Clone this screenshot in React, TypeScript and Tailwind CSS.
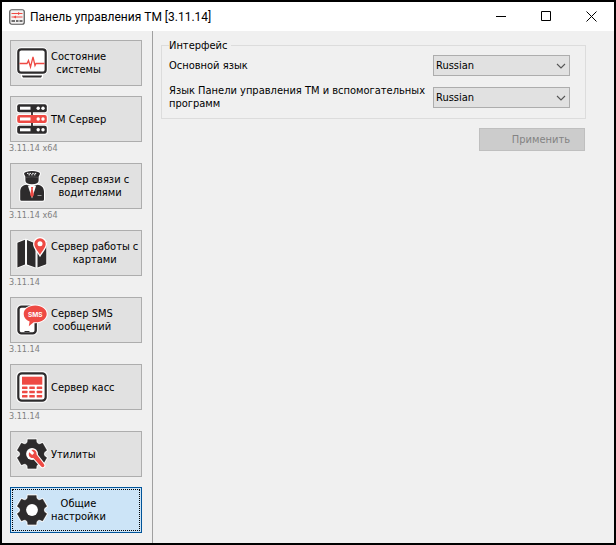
import { useId, useState } from "react";
import type { ReactNode } from "react";

const DARK = "#2d2b2c";
const RED = "#ee4a44";

function Icon({ children }: { children: ReactNode }) {
  return (
    <svg viewBox="0 0 32 32" className="size-8 shrink-0" aria-hidden="true">
      {children}
    </svg>
  );
}

function MonitorIcon() {
  return (
    <Icon>
      <rect x="0.3" y="0.3" width="31.4" height="27.4" rx="5" fill="#fff" />
      <rect x="5" y="26" width="22" height="5.6" rx="1.5" fill="#fff" />
      <rect x="2.3" y="2.3" width="27.4" height="23.4" rx="3" fill="#fff" stroke={DARK} strokeWidth="2.2" />
      <path d="M6 28.4H26V29L25 30.6H7L6 29Z" fill={DARK} />
      <path d="M3.5 16.500H11l1.500-3 2 6.500 2.500-10 2 8.500 1-2H28.500" fill="none" stroke={RED} strokeWidth="1.300" />
    </Icon>
  );
}

function ServerIcon() {
  const rows = [
    { y: 1.2, color: DARK },
    { y: 12, color: RED },
    { y: 22.8, color: DARK },
  ];
  return (
    <Icon>
      <rect x="14" y="4" width="4" height="24" fill="#fff" />
      {rows.map((r) => (
        <rect key={r.y} x="0.2" y={r.y - 1} width="31.6" height="10" rx="3" fill="#fff" />
      ))}
      <path d="M16 8V25" stroke={DARK} strokeWidth="1.8" />
      {rows.map((r) => (
        <g key={r.y}>
          <rect x="1.2" y={r.y} width="29.6" height="8" rx="2" fill={r.color} />
          <rect x="4" y={r.y + 2.5} width="10.5" height="3" fill="#fff" />
          <circle cx="22.2" cy={r.y + 4} r="1.7" fill="#fff" />
          <circle cx="27" cy={r.y + 4} r="1.7" fill="#fff" />
        </g>
      ))}
    </Icon>
  );
}

function DriverIcon() {
  const cap = "M8 3.800Q8 2.600 10 2Q16 0 22 2Q24 2.600 24 3.800L22.600 6.800V10.500Q22.600 14.300 16 14.300T9.400 10.500V6.800Z";
  const body = "M10.500 14.800Q16 17.500 21.500 14.800C26 15.500 28 18 28 22V29.500Q28 30.700 26.500 30.700H5.500Q4.200 30.700 4.200 29.500V22C4.200 18 6 15.500 10.500 14.800Z";
  return (
    <Icon>
      <path d={body} fill="#fff" stroke="#fff" strokeWidth="2" />
      <path d={cap} fill="#fff" stroke="#fff" strokeWidth="2" />
      <path d={body} fill={DARK} />
      <path d="M12 16L16 28.500 20 16Z" fill="#fff" />
      <path d={cap} fill={DARK} />
      <path d="M15 17h2.200l-.5 2 1.200 6-1.900 2.500-1.900-2.500 1.200-6Z" fill={RED} />
      <path d="M11 3.400h1.500m1 0h1.500m1.200 0h1.500m1 0h1.500M12.500 4.800h1.500m1.200 0h1.500m1.200 0h1.500" stroke="#fff" strokeWidth="1" />
      <path d="M9.400 7.400Q16 6.200 22.600 7.400" fill="none" stroke="#666" strokeWidth="0.6" />
      <rect x="21.500" y="25" width="4" height="1" fill="#999" />
    </Icon>
  );
}

function MapIcon() {
  const map = "M1.400 5.800L9 2.700V27.500L1.400 30.600ZM11 2.900L19.500 6.600V30.500L11 27.600ZM21.500 8L30.300 5V27.200L21.500 30.500Z";
  const pin = "M24 17.700C21.500 13.500 18.300 10.600 18.300 7a5.700 5.700 0 0 1 11.400 0C29.700 10.600 26.500 13.500 24 17.700Z";
  return (
    <Icon>
      <path d={map} fill="#fff" stroke="#fff" strokeWidth="1.600" />
      <path d={map} fill={DARK} />
      <path d={pin} fill="#fff" stroke="#fff" strokeWidth="2.600" />
      <path d={pin} fill={RED} />
      <circle cx="24" cy="6.800" r="2.500" fill="#fff" />
    </Icon>
  );
}

function SmsIcon() {
  const bubble = "M19.200 1.600c6.600 0 11.500 3.600 11.500 8.400s-4.900 8.300-11.500 8.300h-1.500L12.800 22.300 13.600 17.400C10 16 7.700 13.400 7.700 10c0-4.800 4.900-8.400 11.500-8.400Z";
  return (
    <Icon>
      <rect x="0.300" y="0.500" width="21.500" height="31" rx="5" fill="#fff" />
      <rect x="2.500" y="2.600" width="17.200" height="26.800" rx="3" fill="#fff" stroke={DARK} strokeWidth="2.400" />
      <path d="M8.500 27.500h5" stroke={DARK} strokeWidth="1" />
      <path d={bubble} fill="#fff" stroke="#fff" strokeWidth="2" />
      <path d={bubble} fill={RED} />
      <text x="19.200" y="12.500" textAnchor="middle" fill="#fff" fontSize="6.500" fontWeight="700" fontFamily="Inter, sans-serif">
        SMS
      </text>
    </Icon>
  );
}

function CashIcon() {
  return (
    <Icon>
      <rect x="0.200" y="0.200" width="31.600" height="31.600" rx="5" fill="#fff" />
      <rect x="2.300" y="2.300" width="27.400" height="27.400" rx="3.500" fill="#fff" stroke={DARK} strokeWidth="2.200" />
      <rect x="6" y="5.700" width="20.300" height="8" fill={RED} />
      {[15.4, 19.7, 24].map((y) =>
        [6, 13.3, 20.7].map((x) => <rect key={`${x}-${y}`} x={x} y={y} width="5.500" height="2.600" rx="0.500" fill={RED} />)
      )}
    </Icon>
  );
}

/* Six-toothed gear outline centred in the 32-unit box. */
const GEAR = (() => {
  const pts: string[] = [];
  const at = (deg: number, r: number) => {
    const a = (deg * Math.PI) / 180;
    pts.push(`${(16 + r * Math.sin(a)).toFixed(2)} ${(16 - r * Math.cos(a)).toFixed(2)}`);
  };
  for (let i = 0; i < 6; i++) {
    const c = i * 60;
    at(c - 25, 12);
    at(c - 20, 13);
    at(c - 16, 15.2);
    at(c + 16, 15.2);
    at(c + 20, 13);
    at(c + 25, 12);
  }
  return `M${pts.join("L")}Z`;
})();

function GearIcon({ wrench = false }: { wrench?: boolean }) {
  const tool = "M13.200 14.200l3 2.800 2-2-2.800-3c2.600-.9 5.600 1 5.200 4.600l7.400 9.600c1.500 2.200-1.200 4-2.800 2.400l-7.800-8.700c-3.300.6-5.700-2.200-4.200-5.700Z";
  return (
    <Icon>
      <path d={GEAR} fill="#fff" stroke="#fff" strokeWidth="2.200" strokeLinejoin="round" />
      <path d={GEAR} fill={DARK} stroke={DARK} strokeWidth="0.400" strokeLinejoin="round" />
      <circle cx="16" cy="16" r="5.900" fill="#fff" />
      {wrench && (
        <>
          <path d={tool} fill="#fff" stroke="#fff" strokeWidth="2" />
          <path d={tool} fill={RED} />
        </>
      )}
    </Icon>
  );
}

function AppLogo() {
  return (
    <svg viewBox="0 0 16 16" className="size-4 shrink-0" aria-hidden="true">
      <rect x="0.750" y="0.750" width="14.500" height="14.500" rx="2" fill="#f4f2f2" stroke="#555" strokeWidth="1.200" />
      <path d="M2.500 4.500h11M2.500 8h11" stroke={RED} strokeWidth="1.200" />
      <path d="M9 3l2.500 1.500L9 6ZM7 6.500L4.500 8 7 9.500Z" fill={RED} />
      <path d="M2.500 12h3.500m1 0h2.500m1 0h3" stroke="#444" strokeWidth="1.400" />
    </svg>
  );
}

const SECTIONS: { lines: string[]; icon: ReactNode; version?: string }[] = [
  { lines: ["Состояние", "системы"], icon: <MonitorIcon /> },
  { lines: ["TM Сервер"], icon: <ServerIcon />, version: "3.11.14 x64" },
  { lines: ["Сервер связи с", "водителями"], icon: <DriverIcon />, version: "3.11.14 x64" },
  { lines: ["Сервер работы с", "картами"], icon: <MapIcon />, version: "3.11.14" },
  { lines: ["Сервер SMS", "сообщений"], icon: <SmsIcon />, version: "3.11.14" },
  { lines: ["Сервер касс"], icon: <CashIcon />, version: "3.11.14" },
  { lines: ["Утилиты"], icon: <GearIcon wrench /> },
  { lines: ["Общие", "настройки"], icon: <GearIcon /> },
];

function LanguageRow({ label }: { label: string }) {
  const id = useId();
  return (
    <div className="flex min-h-8 items-center justify-between gap-1">
      <label htmlFor={id}>{label}</label>
      <div className="relative w-[137px] shrink-0">
        <select
          id={id}
          defaultValue="Russian"
          className="block h-[21px] w-full appearance-none border border-[#adadad] bg-[#e1e1e1] pl-[2px] pr-5"
        >
          <option>Russian</option>
          <option>English</option>
        </select>
        <svg viewBox="0 0 10 6" className="pointer-events-none absolute right-1 top-2 h-[6px] w-[10px]" aria-hidden="true">
          <path d="M1 1l4 4 4-4" fill="none" stroke="#555" strokeWidth="1.100" />
        </svg>
      </div>
    </div>
  );
}

export default function App() {
  const [active, setActive] = useState(7);
  return (
    <div className="flex min-h-screen flex-col border-2 border-black bg-[#f0f0f0] font-['DejaVu_Sans_Condensed','DejaVu_Sans',sans-serif] text-[11px] leading-[13px] text-black">
      <header className="flex h-[29px] items-center bg-white pl-[7px]">
        <AppLogo />
        <h1 className="ml-[5px] flex-1 font-[Roboto,sans-serif] text-[12px] leading-4">Панель управления TM [3.11.14]</h1>
        <button type="button" aria-label="Свернуть" className="flex h-full w-[45px] items-center justify-center">
          <svg viewBox="0 0 11 11" className="size-[11px]">
            <path d="M0 5.500h10" stroke="#000" />
          </svg>
        </button>
        <button type="button" aria-label="Развернуть" className="flex h-full w-[45px] items-center justify-center">
          <svg viewBox="0 0 11 11" className="size-[11px]">
            <path d="M.5.5h9v9h-9Z" fill="none" stroke="#000" />
          </svg>
        </button>
        <button type="button" aria-label="Закрыть" className="flex h-full w-[45px] items-center justify-center">
          <svg viewBox="0 0 11 11" className="size-[11px]">
            <path d="M.5.5l10 10M10.500.5l-10 10" stroke="#000" />
          </svg>
        </button>
      </header>
      <div className="flex flex-1">
        <nav className="w-[151px] shrink-0 border-r border-[#a0a0a0] px-2 pt-[9px]">
          {SECTIONS.map((s, i) => (
            <div key={s.lines[0] + i} className={s.version ? "h-[67px]" : "h-14"}>
              <button
                type="button"
                onClick={() => setActive(i)}
                className={`relative flex h-[46px] w-[132px] items-center gap-[3px] border pl-[5px] ${
                  i === active ? "border-[#005499] bg-[#cce4f7]" : "border-[#adadad] bg-[#e1e1e1]"
                }`}
              >
                {s.icon}
                <span className="whitespace-nowrap text-center">
                  {s.lines.map((l) => (
                    <span key={l} className="block">
                      {l}
                    </span>
                  ))}
                </span>
                {i === active && <span className="pointer-events-none absolute inset-[1px] border border-dotted border-black" />}
              </button>
              {s.version && <p className="-ml-px text-[9px] leading-[13px] text-[#808080]">{s.version}</p>}
            </div>
          ))}
        </nav>
        <main className="min-w-0 flex-1 pl-2 pr-7 pt-2">
          <fieldset className="border border-[#dcdcdc] pb-[5px] pl-[7px] pr-[15px]">
            <legend className="pr-1">Интерфейс</legend>
            <div className="-mt-[3px]">
              <LanguageRow label="Основной язык" />
              <LanguageRow label="Язык Панели управления ТМ и вспомогательных программ" />
            </div>
          </fieldset>
          <div className="mt-[9px] flex justify-end pr-px">
            <button type="button" disabled className="h-[23px] w-[106px] border border-[#bfbfbf] bg-[#cccccc] pr-[14px] text-right text-[#838383]">
              Применить
            </button>
          </div>
        </main>
      </div>
    </div>
  );
}
